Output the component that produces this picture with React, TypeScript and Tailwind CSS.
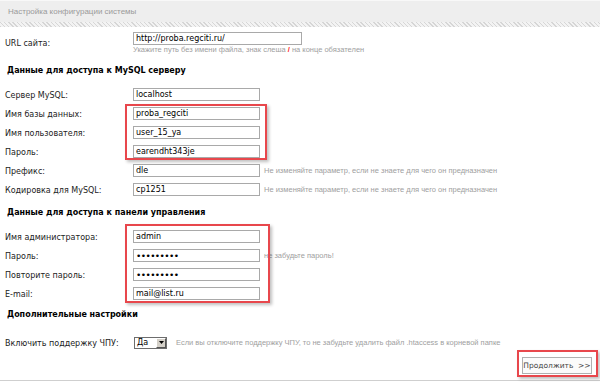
import React from 'react';

const FONT = "font-['DejaVu_Sans',Verdana,sans-serif]";
const HINT_FONT = "font-['Liberation_Sans',Arial,sans-serif]";
const INPUT_CLASS = `h-[13px] w-[127px] border border-[#a9a9a9] bg-white px-[2px] text-[8px] leading-[11px] text-black outline-none ${FONT}`;

const Row = ({ label, value, type = 'text', hint }: { label: string; value: string; type?: string; hint?: string }) => (
    <div className="flex h-[19px] items-center">
        <div className="mt-[3px] w-[133px] pl-[5px] text-[8px] text-[#222]">{label}</div>
        <input
            type={type}
            readOnly
            value={value}
            className={`${INPUT_CLASS} ${type === 'password' ? 'text-[9px] tracking-[-0.6px]' : ''}`}
        />
        {hint ? <span className={`ml-[4px] text-[7.5px] text-[#a0a0a0] ${HINT_FONT}`}>{hint}</span> : null}
    </div>
);

const Heading = ({ children, className }: { children: React.ReactNode; className: string }) => (
    <div className={`flex items-end pl-[7px] text-[8px] font-bold text-black ${className}`}>{children}</div>
);

const RedBox = ({ className }: { className: string }) => (
    <div className={`pointer-events-none absolute border-2 border-[#e8474c] shadow-[2px_2px_3px_rgba(0,0,0,0.25)] ${className}`} />
);

export default function App() {
    return (
        <div className={`relative h-[382px] w-[600px] overflow-hidden bg-white ${FONT}`}>
            <div className={`flex h-[22px] items-center border-t border-[#f8f8f8] bg-[#eeeeee] pl-[8px] text-[8px] text-[#9a9a9a] ${HINT_FONT}`}>
                Настройка конфигурации системы
            </div>
            <div className="h-[5px] bg-[repeating-linear-gradient(45deg,#d6d6d6_0_1px,#f3f3f3_1px_3px)]" />

            <div className="mt-[5px] flex h-[13px] items-start">
                <div className="mt-[6px] w-[133px] pl-[5px] text-[8px] text-[#222]">URL сайта:</div>
                <input readOnly value="http://proba.regciti.ru/" className={`${INPUT_CLASS} w-[169px]`} />
            </div>
            <div className={`flex h-[10px] items-center pl-[133px] text-[7.5px] text-[#a0a0a0] ${HINT_FONT}`}>
                Укажите путь без имени файла, знак слеша&nbsp;<span className="font-bold text-[#ff2020]">/</span>&nbsp;на конце обязателен
            </div>

            <Heading className="h-[30px] pb-[8px]">Данные для доступа к MySQL серверу</Heading>
            <Row label="Сервер MySQL:" value="localhost" />
            <Row label="Имя базы данных:" value="proba_regciti" />
            <Row label="Имя пользователя:" value="user_15_ya" />
            <Row label="Пароль:" value="earendht343je" />
            <Row label="Префикс:" value="dle" hint="Не изменяйте параметр, если не знаете для чего он предназначен" />
            <Row label="Кодировка для MySQL:" value="cp1251" hint="Не изменяйте параметр, если не знаете для чего он предназначен" />

            <Heading className="h-[28px] pb-[8px]">Данные для доступа к панели управления</Heading>
            <Row label="Имя администратора:" value="admin" />
            <Row label="Пароль:" value="123456789" type="password" hint="не забудьте пароль!" />
            <Row label="Повторите пароль:" value="123456789" type="password" />
            <Row label="E-mail:" value="mail@list.ru" />

            <Heading className="h-[30px] pb-[12px]">Дополнительные настройки</Heading>
            <div className="flex h-[19px] items-center">
                <div className="mt-[2px] w-[134px] pl-[5px] text-[8px] text-[#222]">Включить поддержку ЧПУ:</div>
                <div className="flex h-[12px] w-[33px] items-stretch border border-[#6d6d6d] bg-white">
                    <span className="flex-1 pl-[2px] text-[8px] leading-[10px] text-black">Да</span>
                    <span className="flex w-[10px] items-center justify-center border border-white border-r-[#555] border-b-[#555] bg-[#d4d0c8]">
                        <svg width="5" height="3" viewBox="0 0 5 3"><path d="M0 0h5L2.5 3z" fill="#000" /></svg>
                    </span>
                </div>
                <span className={`ml-[9px] text-[7.5px] text-[#a0a0a0] ${HINT_FONT}`}>
                    Если вы отключите поддержку ЧПУ, то не забудьте удалить файл .htaccess в корневой папке
                </span>
            </div>

            <div className="mt-[5px] flex justify-end pr-[8px]">
                <button type="button" className="h-[17px] w-[70px] whitespace-nowrap border border-[#b0b0b0] bg-[#fbfbfb] px-0 text-[7.5px] text-[#444]">
                    Продолжить&nbsp;&nbsp;&gt;&gt;
                </button>
            </div>

            <div className="absolute bottom-[1px] left-0 h-px w-full bg-[#cfcfcf]" />

            <RedBox className="left-[125px] top-[104px] h-[56px] w-[142px]" />
            <RedBox className="left-[125px] top-[224px] h-[79px] w-[145px]" />
            <RedBox className="left-[517px] top-[350px] h-[27px] w-[81px]" />
        </div>
    );
}
